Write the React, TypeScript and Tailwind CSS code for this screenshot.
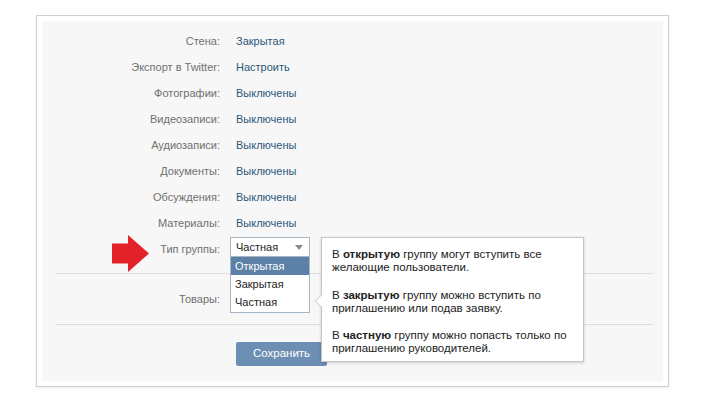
import React from 'react'

const ROWS = [
  { label: 'Стена:', value: 'Закрытая' },
  { label: 'Экспорт в Twitter:', value: 'Настроить' },
  { label: 'Фотографии:', value: 'Выключены' },
  { label: 'Видеозаписи:', value: 'Выключены' },
  { label: 'Аудиозаписи:', value: 'Выключены' },
  { label: 'Документы:', value: 'Выключены' },
  { label: 'Обсуждения:', value: 'Выключены' },
  { label: 'Материалы:', value: 'Выключены' },
]

const OPTIONS = ['Открытая', 'Закрытая', 'Частная']

function RedArrow() {
  return (
    <svg width="38" height="38" viewBox="0 0 38 38" className="absolute left-[70px] top-[-6px]">
      <polygon points="0,8.5 16,8.5 16,0 37,18.5 16,37 16,28.5 0,28.5" fill="#e32129" />
    </svg>
  )
}

function GroupTypeHint() {
  return (
    <div className="absolute left-[91px] top-0 w-[263px] bg-white border border-[#c5c5c5] shadow-[0_1px_3px_rgba(0,0,0,0.18)] px-[10px] pt-[10px] pb-[6px] text-[11.5px] leading-[13px] text-[#222] z-20">
      {/* хвостик */}
      <div className="absolute left-[-7px] top-[56px] w-0 h-0 border-y-[7px] border-y-transparent border-r-[7px] border-r-[#c5c5c5]" />
      <div className="absolute left-[-6px] top-[57px] w-0 h-0 border-y-[6px] border-y-transparent border-r-[6px] border-r-white" />
      <p className="mb-[15px]">
        В <b>открытую</b> группу могут вступить все желающие пользователи.
      </p>
      <p className="mb-[14px]">
        В <b>закрытую</b> группу можно вступить по приглашению или подав заявку.
      </p>
      <p>
        В <b>частную</b> группу можно попасть только по приглашению руководителей.
      </p>
    </div>
  )
}

function GroupTypeSelect() {
  return (
    <div className="relative ml-[-6px] top-[-2px]">
      <div className="w-[80px] h-[20px] border border-[#a7b6c5] bg-white flex items-center justify-between pl-[5px] pr-[6px] text-[#222]">
        <span>Частная</span>
        <span className="w-0 h-0 border-x-[4px] border-x-transparent border-t-[5px] border-t-[#8a8a8a]" />
      </div>
      <div className="absolute left-0 top-[20px] w-[80px] border border-[#a7b6c5] border-t-0 bg-white z-10 pb-[1px]">
        {OPTIONS.map((o, i) => (
          <div
            key={o}
            className={`h-[18px] flex items-center pl-[4px] ${i === 0 ? 'bg-[#5d80a6] text-white' : 'text-[#222]'}`}
          >
            {o}
          </div>
        ))}
      </div>
      <GroupTypeHint />
    </div>
  )
}

export default function App() {
  return (
    <div className="w-[719px] h-[411px] bg-white pt-[15px] pl-[36px] font-['Liberation_Sans',Arial,sans-serif] text-[11px]">
      <div className="w-[633px] h-[372px] border border-[#cfcfcf] shadow-[0_1px_2px_rgba(0,0,0,0.08)] bg-white p-[5px]">
        <div className="h-full bg-[#f7f7f7] pt-[7px]">
          {ROWS.map((r) => (
            <div key={r.label} className="flex items-center h-[26px]">
              <div className="w-[178px] text-right text-[#707070]">{r.label}</div>
              <div className="ml-[16px] text-[#2b587a]">{r.value}</div>
            </div>
          ))}

          <div className="flex items-center h-[26px]">
            <div className="relative w-[178px] text-right text-[#707070]">
              <RedArrow />
              Тип группы:
            </div>
            <div className="ml-[16px]">
              <GroupTypeSelect />
            </div>
          </div>

          <div className="ml-[14px] mr-[10px] mt-[11px] border-t border-[#dedede]" />

          <div className="flex items-center h-[26px] mt-[12px]">
            <div className="w-[178px] text-right text-[#707070]">Товары:</div>
            <div className="ml-[16px] text-[#2b587a]">Выключены</div>
          </div>

          <div className="ml-[14px] mr-[10px] mt-[12px] border-t border-[#dedede]" />

          <div className="flex mt-[17px] pl-[194px]">
            <button className="w-[91px] h-[24px] rounded-[2px] bg-[#6d8fb3] text-white text-[11.5px]">
              Сохранить
            </button>
          </div>
        </div>
      </div>
    </div>
  )
}
